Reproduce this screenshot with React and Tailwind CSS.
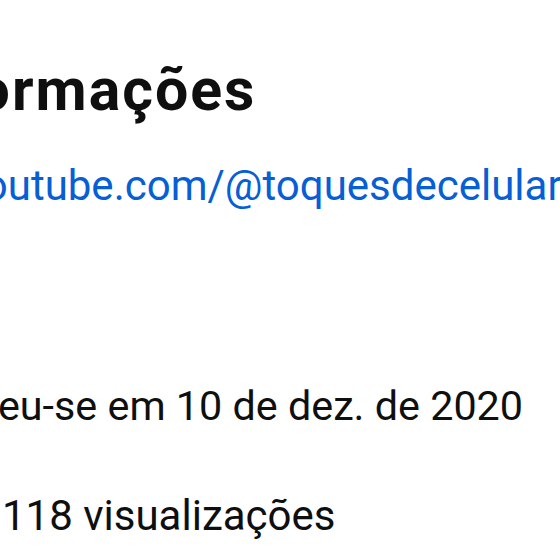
export default function App() {
  return (
    <div className="w-[560px] h-[560px] overflow-hidden bg-white font-['Roboto',sans-serif] text-[#0f0f0f]">
      <div className="pt-[62px] flex flex-col">
        <h2 className="whitespace-nowrap text-[59px] leading-[56px] font-bold tracking-[2px] ml-[-253px]">Mais informações</h2>
        <div className="mt-[40px] whitespace-nowrap text-[42px] leading-[56px] text-[#065fd4] ml-[-139px]">www.youtube.com/@toquesdecelular</div>
        <div className="mt-[164px] whitespace-nowrap text-[41.3px] leading-[56px] ml-[-134px]">Inscreveu-se em 10 de dez. de 2020</div>
        <div className="mt-[54px] whitespace-nowrap text-[42px] leading-[56px] ml-[2px]">118 visualizações</div>
      </div>
    </div>
  );
}
